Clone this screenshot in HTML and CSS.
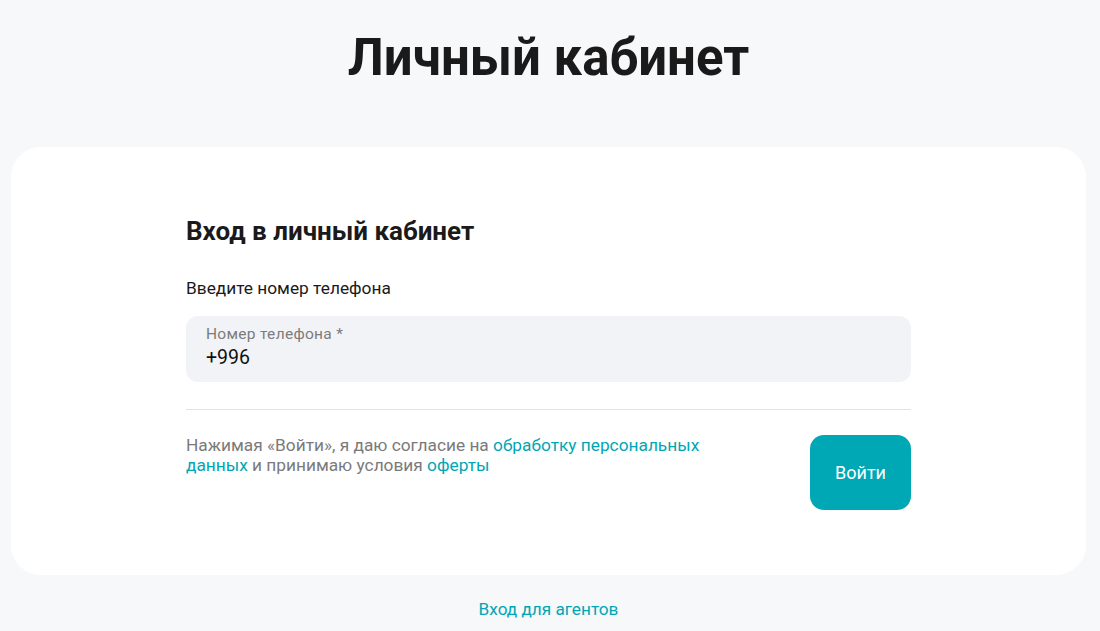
FILE: index.html
```html
<!DOCTYPE html>
<html lang="ru">
<head>
    <meta charset="utf-8">
    <title>Личный кабинет</title>
    <link rel="stylesheet" href="styles.css">
</head>
<body>
    <main class="page">
        <h1 class="page-title">Личный кабинет</h1>

        <section class="card">
            <form class="login-form">
                <h2 class="form-title">Вход в личный кабинет</h2>
                <p class="form-hint">Введите номер телефона</p>

                <label class="phone-field">
                    <span class="phone-label">Номер телефона *</span>
                    <input class="phone-input" type="tel" value="+996">
                </label>

                <div class="form-footer">
                    <p class="consent">
                        Нажимая «Войти», я даю согласие на <a href="#">обработку персональных данных</a>
                        и принимаю условия <a href="#">оферты</a>
                    </p>
                    <button class="submit-btn" type="submit">Войти</button>
                </div>
            </form>
        </section>

        <a class="agents-link" href="#">Вход для агентов</a>
    </main>
</body>
</html>
```

FILE: styles.css
```css
* {
    margin: 0;
    padding: 0;
    box-sizing: border-box;
}

body {
    font-family: Roboto, "Noto Sans", Arial, sans-serif;
    background-color: #f7f8fa;
    color: #1a1a1a;
}

a {
    color: #00a6b4;
    text-decoration: none;
}

.page {
    display: flex;
    flex-direction: column;
    align-items: center;
    padding: 0 14px 0 11px;
}

.page-title {
    font-size: 51px;
    font-weight: 700;
    line-height: 62px;
    margin-top: 27px;
    margin-bottom: 58px;
    color: #1a1a1a;
}

.card {
    width: 100%;
    background: #fff;
    border-radius: 30px;
    padding: 69px 0 65px;
}

.login-form {
    max-width: 725px;
    margin: 0 auto;
}

.form-title {
    font-size: 26px;
    font-weight: 700;
    line-height: 30px;
    margin-bottom: 32px;
}

.form-hint {
    font-size: 17.3px;
    line-height: 20px;
    margin-bottom: 18px;
}

.phone-field {
    display: flex;
    flex-direction: column;
    height: 66px;
    padding: 10px 20px 0;
    background: #f2f3f6;
    border-radius: 12px;
}

.phone-label {
    font-size: 15.5px;
    line-height: 17px;
    letter-spacing: 0.3px;
    color: #7c7c7c;
}

.phone-input {
    font-family: Roboto, Arial, sans-serif;
    font-size: 19.5px;
    line-height: 24px;
    margin-top: 3px;
    border: none;
    outline: none;
    background: transparent;
    color: #111;
}

.form-footer {
    display: flex;
    justify-content: space-between;
    align-items: flex-start;
    margin-top: 27px;
    padding-top: 25px;
    border-top: 1px solid #e3e3e3;
}

.consent {
    max-width: 530px;
    font-size: 17.3px;
    line-height: 20px;
    color: #7a7a7a;
}

.submit-btn {
    width: 101px;
    height: 75px;
    border: none;
    border-radius: 14px;
    background: #00a8b5;
    color: #fff;
    font-family: inherit;
    font-size: 18px;
    cursor: pointer;
}

.agents-link {
    font-size: 17.2px;
    line-height: 20px;
    margin-top: 24px;
}
```
